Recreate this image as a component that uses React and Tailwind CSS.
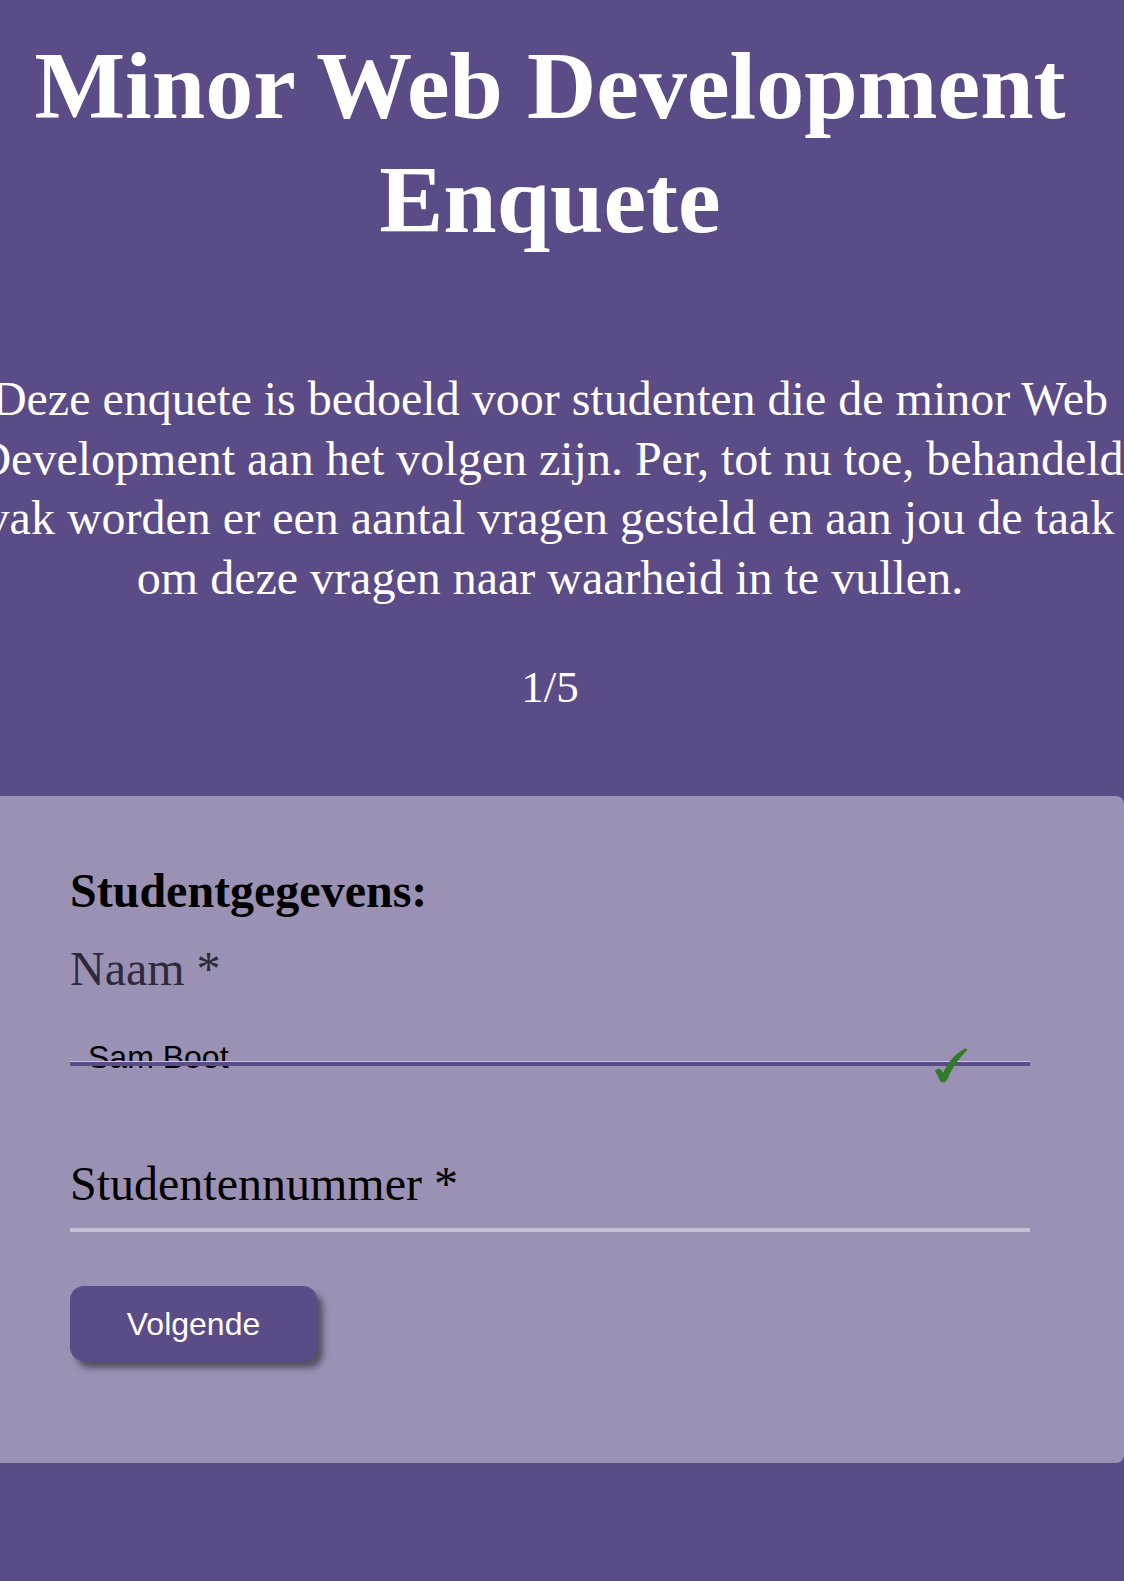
export default function App() {
  return (
    <div className="min-h-[1581px] w-full overflow-x-hidden bg-[#5b4b87] font-['Liberation_Serif',serif]">
      <div className="w-[1100px]">
        {/* Header */}
        <h1 className="mt-[29px] text-center text-[96px] leading-[114px] font-bold text-white">
          Minor Web Development Enquete
        </h1>
        <p className="-mx-[40px] mt-[112px] text-center text-[48px] leading-[59.5px] text-white">
          Deze enquete is bedoeld voor studenten die de minor Web Development aan het volgen zijn. Per, tot nu toe, behandeld vak worden er een aantal vragen gesteld en aan jou de taak om deze vragen naar waarheid in te vullen.
        </p>
        <div className="mt-[54px] text-center text-[45px] leading-[52px] text-white">1/5</div>

        {/* Form card */}
        <div className="-mx-[24px] mt-[83px] rounded-lg bg-[#9b91b5] px-[94px] pt-[67px] pb-[102px]">
          <h2 className="text-[48px] leading-[55px] font-bold text-black">Studentgegevens:</h2>
          <div className="mt-[23px] text-[48px] leading-[55px] text-[#2e2a3b]">Naam *</div>

          <div className="mt-[43px] flex h-[22px] items-start justify-between">
            <span className="pl-[18px] font-['Liberation_Sans',Arial,sans-serif] text-[32px] leading-[37px] text-black">
              Sam Boot
            </span>
            <svg
              className="relative z-10 mt-[9px] mr-[62px]"
              width="34"
              height="35"
              viewBox="0 0 34 35"
            >
              <path
                d="M1 23 C3 20 6 20 7.5 22.5 L9 25 C14 14 22 5 31 0.5 C32.5 0 34 1.5 33 2.5 C25 10 18 20 13.5 31 C11.5 35.5 7 35.5 5.5 32 C4 28 2.5 25.5 1 23 Z"
                fill="#2f7d2a"
              />
            </svg>
          </div>
          <div className="relative h-[5px] border-t border-[#cdc6de] bg-[#5b4b87]" />

          <div className="mt-[90px] text-[48px] leading-[55px] text-black">Studentennummer *</div>
          <div className="mt-[17px] h-[4px] bg-[#c6bfd8]" />

          <button className="mt-[54px] h-[75px] w-[247px] rounded-[14px] bg-[#5b4b87] font-['Liberation_Sans',Arial,sans-serif] text-[32px] text-white shadow-[6px_7px_6px_rgba(0,0,0,0.45)]">
            Volgende
          </button>
        </div>
      </div>
    </div>
  );
}
